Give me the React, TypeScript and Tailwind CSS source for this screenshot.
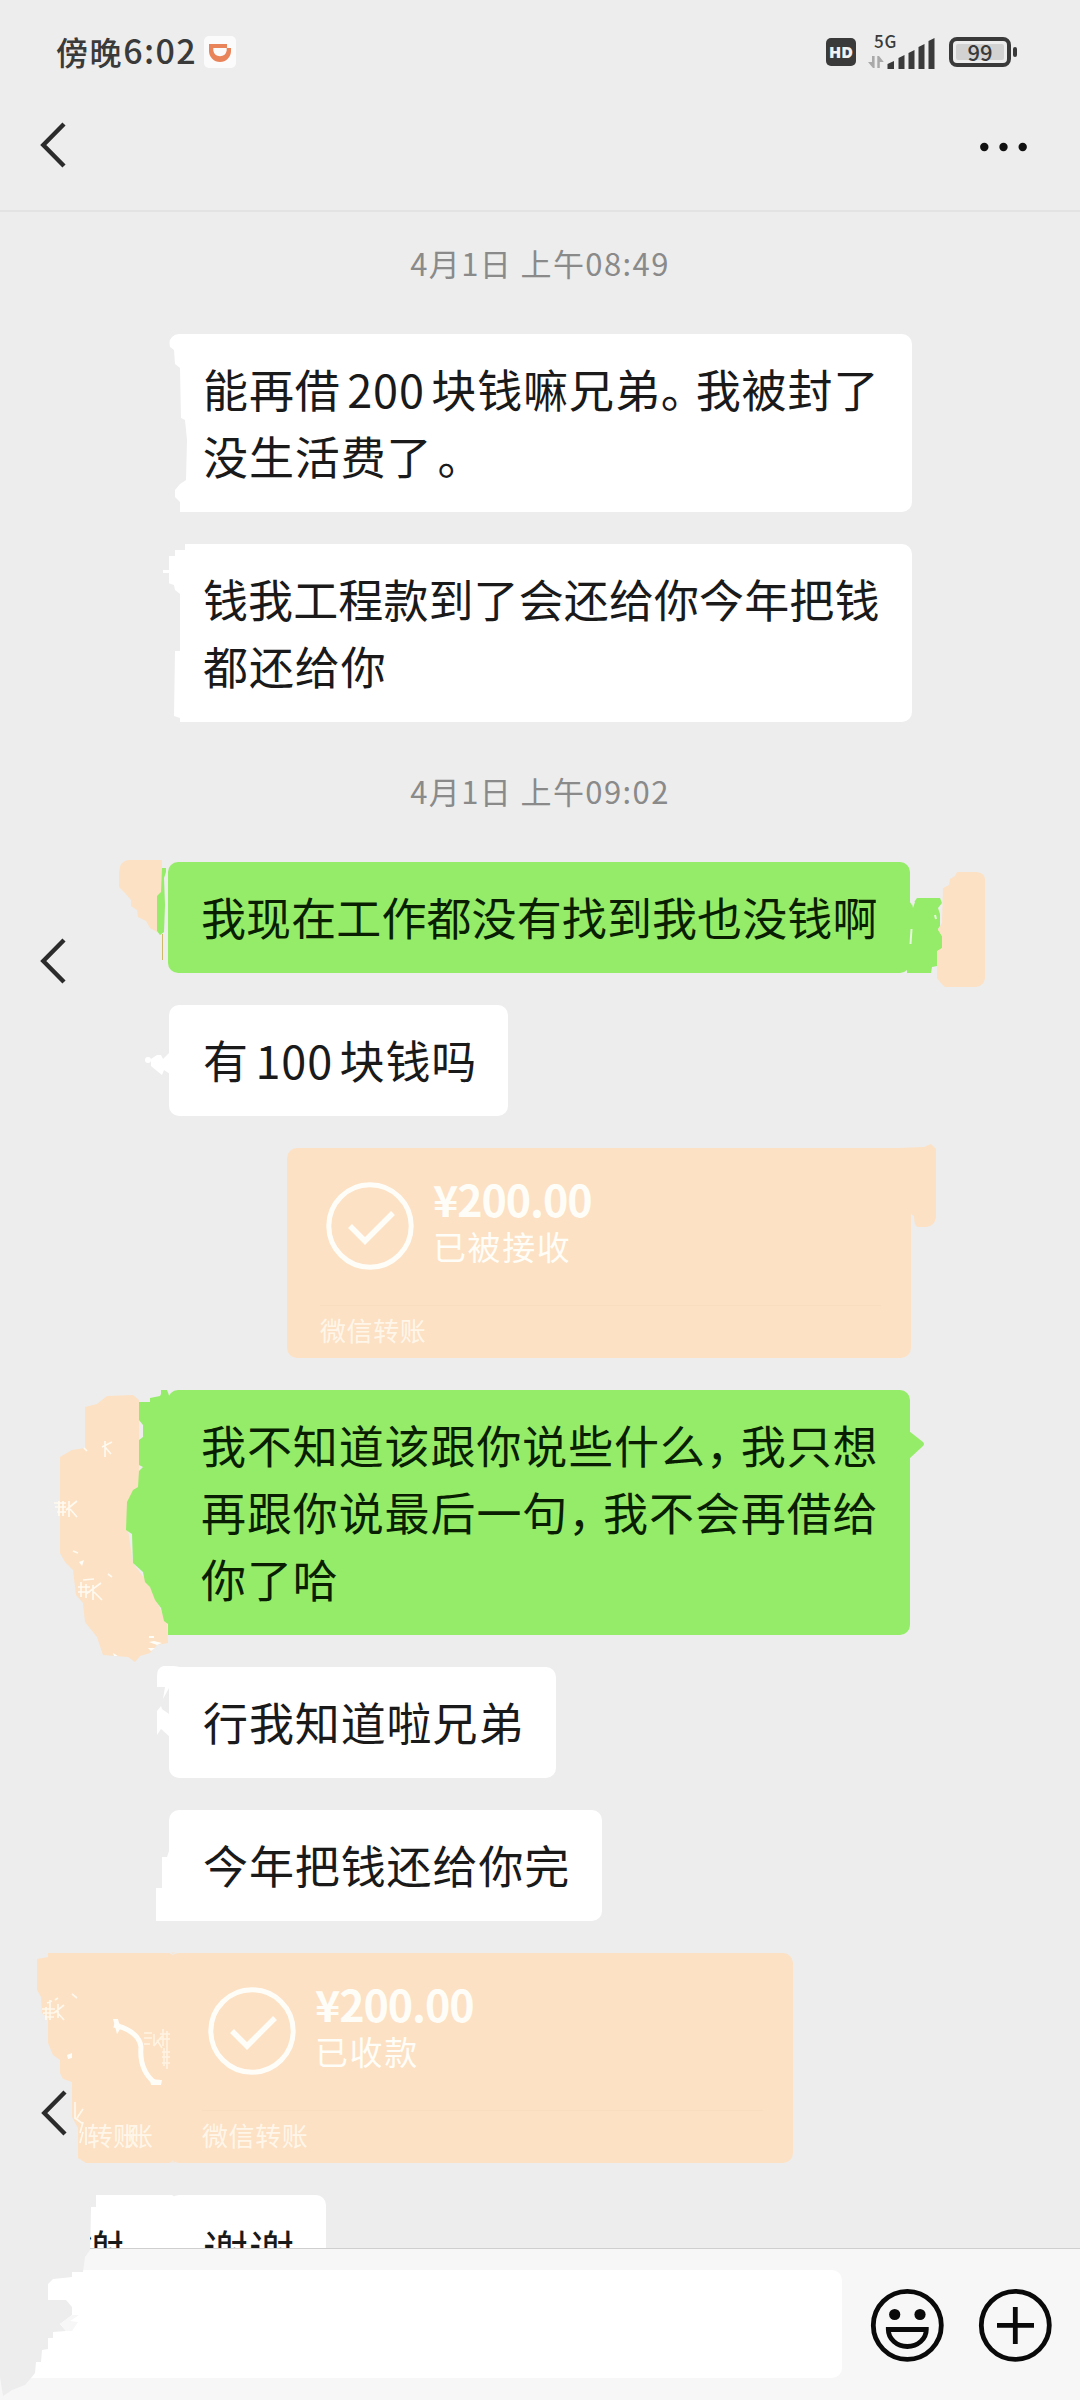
import type { ReactNode } from "react";

type BrushProps = { top: number; height: number; children: ReactNode };

// Brush strokes over a row; coordinates inside are page coordinates.
function Brush({ top, height, children }: BrushProps) {
    return (
        <svg
            className="absolute left-0 top-0 overflow-visible pointer-events-none"
            width="1080"
            height={height}
            viewBox={`0 ${top} 1080 ${height}`}
            fill="none"
        >
            {children}
        </svg>
    );
}

function BackIcon() {
    return (
        <svg width="28" height="48" viewBox="0 0 28 48" fill="none">
            <path d="M25 3L4.3 24L25 45" stroke="#2b2b2b" strokeWidth="4.4" />
        </svg>
    );
}

function StatusBar() {
    return (
        <div className="flex h-[104px] items-center justify-between pl-[56px] pr-[63px] text-[#3a3a3a]">
            <div className="flex items-center">
                <span className="-mt-[3px] text-[32px] leading-[40px] font-medium tracking-[1.6px]">
                    傍晚
                </span>
                <span className="-mt-[4px] text-[34px] leading-[40px] font-medium tracking-[1.4px]">
                    6:02
                </span>
                <svg className="ml-[7px]" width="32" height="32" viewBox="0 0 32 32">
                    <rect width="32" height="32" rx="5" fill="#fbfbfb" />
                    <path
                        d="M5 8H23V12H27V15A11 11 0 0 1 5 15ZM9.3 12V14.5A6.8 6.8 0 0 0 22.7 14.5V12Z"
                        fill="#e9835a"
                        fillRule="evenodd"
                    />
                </svg>
            </div>
            <div className="flex items-center">
                <div className="flex h-[28px] w-[30px] items-center justify-center rounded-[5px] bg-[#3a3a3a] font-['Open_Sans','Noto_Sans',sans-serif] text-[16px] leading-none font-extrabold text-[#f2f2f2]">
                    HD
                </div>
                <div className="relative ml-[12px] h-[34px] w-[67px]">
                    <span className="absolute left-[6px] -top-[2px] text-[17px] leading-[16px] font-medium tracking-[0.8px]">
                        5G
                    </span>
                    <svg className="absolute inset-0" width="67" height="34" viewBox="0 0 67 34">
                        <path
                            d="M4 21H6.6V33H5L0 27H4ZM9.3 33V21H11L15.8 27H11.8V33Z"
                            fill="#a9a9a9"
                        />
                        <g fill="#3a3a3a">
                            <path d="M19.5 29L26 26V34H19.5Z" />
                            <path d="M30.5 23L36.5 20V34H30.5Z" />
                            <path d="M40.5 18L46.5 15V34H40.5Z" />
                            <path d="M50.5 12L56.5 9V34H50.5Z" />
                            <path d="M60.5 6L66.5 3V34H60.5Z" />
                        </g>
                    </svg>
                </div>
                <div className="ml-[14px] flex h-[30px] w-[62px] items-center justify-center rounded-[8px] border-[4px] border-[#3a3a3a] p-[3px]">
                    <span className="flex h-full w-full items-center justify-center rounded-[2px] bg-[#d2d2d2] pb-[2px] text-[22px] leading-none font-medium">
                        99
                    </span>
                </div>
                <div className="ml-[2px] h-[10px] w-[4px] rounded-[2px] bg-[#3a3a3a]" />
            </div>
        </div>
    );
}

function NavBar() {
    return (
        <div className="flex h-[108px] justify-between border-b-2 border-[#e3e3e3] pl-[39px] pr-[53px] pt-[17px]">
            <BackIcon />
            <svg className="mt-[21px]" width="47" height="10" viewBox="0 0 47 10" fill="#111">
                <circle cx="4.3" cy="5" r="4.2" />
                <circle cx="23.5" cy="5" r="4.2" />
                <circle cx="42.7" cy="5" r="4.2" />
            </svg>
        </div>
    );
}

function TimeLabel({ children }: { children: ReactNode }) {
    return (
        <div className="flex h-[76px] items-center justify-center pb-[3px] text-[31px] leading-none tracking-[1.4px] text-[#8a8a8a]">
            {children}
        </div>
    );
}

function Received({ width, children, brush }: { width: string; children: ReactNode; brush?: ReactNode }) {
    return (
        <div className="relative flex pl-[169px]">
            <div className={`${width} rounded-[10px] bg-white pt-[21px] pb-[23px] pl-[34px] text-[#1a1a1a]`}>
                {children}
            </div>
            {brush}
        </div>
    );
}

function Sent({ children, brush }: { children: ReactNode; brush?: ReactNode }) {
    return (
        <div className="relative flex pl-[168px]">
            <div className="w-[742px] rounded-[10px] bg-[#95ec69] pt-[21px] pb-[23px] pl-[33px] text-[#0a1f02]">
                {children}
            </div>
            {brush}
        </div>
    );
}

// A line of 15 glyphs is squeezed a little so that it fits the bubble.
function Line({ tight, children }: { tight?: boolean; children: ReactNode }) {
    return (
        <p
            className={`h-[67px] text-[45px] leading-[67px] whitespace-nowrap [word-spacing:-4.5px] ${
                tight ? "tracking-[0.1px]" : "tracking-[0.9px]"
            }`}
        >
            {children}
        </p>
    );
}

// Punctuation in the middle of a line takes less than a full glyph.
function Mark({ children }: { children: ReactNode }) {
    return <span className="mr-[11.5px] [font-feature-settings:'halt']">{children}</span>;
}

function TransferCard({ width, status }: { width: string; status: string }) {
    return (
        <div className={`${width} h-[210px] rounded-[10px] bg-[#fce1c4] pl-[33px] pr-[30px] text-[#fffdf8]`}>
            <div className="flex h-[157px] pt-[34px] pl-[6px]">
                <svg width="88" height="88" viewBox="0 0 88 88" fill="none" stroke="currentColor">
                    <circle cx="44" cy="44" r="41.2" strokeWidth="5" />
                    <path d="M24 44L39 59L67 31" strokeWidth="5.5" />
                </svg>
                <div className="-mt-[3px] ml-[19px]">
                    <p className="h-[45px] text-[43px] leading-[38px] font-bold tracking-[-1.1px]">
                        ¥200.00
                    </p>
                    <p className="text-[33px] leading-[44px] tracking-[1.6px]">{status}</p>
                </div>
            </div>
            <div className="border-t border-[#f8debf] pt-[5px] text-[26px] leading-[38px] tracking-[0.6px] text-[#fff6ea]">
                微信转账
            </div>
        </div>
    );
}

function InputBar() {
    return (
        <div className="relative flex h-[152px] border-t border-[#cfcfcf] bg-[#f7f7f7] pt-[21px]">
            <div className="ml-[30px] h-[108px] w-[812px] rounded-r-[10px] bg-white" />
            <svg
                className="ml-[28px] mt-[18px]"
                width="74"
                height="74"
                viewBox="0 0 74 74"
                fill="none"
                stroke="#0a0a0a"
                strokeWidth="4.8"
            >
                <circle cx="37.3" cy="37.3" r="34" />
                <circle cx="24.7" cy="26.5" r="5.6" fill="#0a0a0a" stroke="none" />
                <circle cx="50" cy="26.5" r="5.6" fill="#0a0a0a" stroke="none" />
                <path d="M18.3 41.5H56.3A19 17 0 0 1 18.3 41.5Z" />
            </svg>
            <svg
                className="ml-[34px] mt-[18px]"
                width="74"
                height="74"
                viewBox="0 0 74 74"
                fill="none"
                stroke="#0a0a0a"
                strokeWidth="4.8"
            >
                <circle cx="37.3" cy="37.3" r="34" />
                <path d="M37.3 19V56M19 37.3H56" />
            </svg>
            <Brush top={2249} height={152}>
                <path
                    d="M0 2247H90V2250L85 2257L83 2272H72V2277L53 2279L48 2284V2300H66L72 2307V2315L60 2324L66 2331L53 2332V2338H48V2349L42 2350L41 2362H36L35 2373L31 2378L25 2385L12 2390L3 2396L0 2377Z"
                    fill="#ededed"
                />
                <path d="M72 2315L60 2324L66 2331H72L78 2322L70 2321L79 2315Z" fill="#f7f7f7" />
            </Brush>
        </div>
    );
}

export default function App() {
    return (
        <div
            lang="zh-CN"
            className="flex h-[2400px] w-[1080px] flex-col overflow-hidden bg-[#ededed] font-['Noto_Sans_CJK_SC',sans-serif]"
        >
            <StatusBar />
            <NavBar />

            <div className="relative flex h-[2036px] flex-col gap-8 overflow-hidden pt-[14px] *:shrink-0">
                <TimeLabel>4月1日 上午08:49</TimeLabel>

                <Received
                    width="w-[743px]"
                    brush={
                        <Brush top={334} height={178}>
                            <path
                                d="M166 333H175L169 340L170 347L174 350L175 364L180 368L181 418L185 420L187 440L186 480L180 484L175 490V497L180 502V513H166Z"
                                fill="#ededed"
                            />
                        </Brush>
                    }
                >
                    <Line>
                        能再借 200 块钱嘛兄弟<Mark>。</Mark>我被封了
                    </Line>
                    <Line>
                        没生活费了<span className="ml-[5px]">。</span>
                    </Line>
                </Received>

                <Received
                    width="w-[743px]"
                    brush={
                        <Brush top={544} height={178}>
                            <path
                                d="M166 543H185V550H175V556H168V583L174 585L175 590L180 594L180 651H175L174 716L180 718V723H166Z"
                                fill="#ededed"
                            />
                            <path d="M163 570H170V573H163Z" fill="#fff" />
                        </Brush>
                    }
                >
                    <Line tight>钱我工程款到了会还给你今年把钱</Line>
                    <Line>都还给你</Line>
                </Received>

                <TimeLabel>4月1日 上午09:02</TimeLabel>

                <Sent
                    brush={
                        <Brush top={862} height={111}>
                            <path
                                d="M119 872Q120 861 128 860H162V893L157 897V932L150 928L146 921L138 917L137 910L131 906V900L125 893L119 887Z"
                                fill="#fce1c4"
                            />
                            <path
                                d="M162 868H166V872L164 878L165 905L164 932L160 935L157 931V896L161 892Z"
                                fill="#95ec69"
                            />
                            <path d="M162.500 934V960" stroke="#cdb96a" />
                            <path
                                d="M907 898L912 905L917 898H940L942 903L938 908L940 914V926L938 929L942 936V948L937 952V966L932 967L931 973H907Z"
                                fill="#95ec69"
                            />
                            <path d="M911.500 929L910.500 944M935 915L936 919" stroke="#e5f7dc" strokeWidth="2" />
                            <path d="M911 899L915 902L913 908Z" fill="#ededed" />
                            <path
                                d="M943 888L949 885L950 879L955 876L957 872H977Q985 873 985 880V978Q984 986 976 987H945L940 982L937 978V951L942 948V936L938 930L942 923Z"
                                fill="#fce1c4"
                            />
                        </Brush>
                    }
                >
                    <Line tight>我现在工作都没有找到我也没钱啊</Line>
                </Sent>

                <Received
                    width="w-[339px]"
                    brush={
                        <Brush top={1005} height={111}>
                            <path
                                d="M170 1052L163 1059L161 1055L157 1055L151 1059L151 1066L157 1071L162 1075L164 1070L170 1074Z"
                                fill="#fff"
                            />
                            <circle cx="148" cy="1060" r="3" fill="#fff" />
                        </Brush>
                    }
                >
                    <Line>有 100 块钱吗</Line>
                </Received>

                <div className="relative flex pl-[287px]">
                    <TransferCard width="w-[624px]" status="已被接收" />
                    <Brush top={1148} height={210}>
                        <path
                            d="M898 1148L924 1147L931 1144L936 1149V1217Q935 1226 926 1227H918Q914 1226 914 1216L911 1214V1168Z"
                            fill="#fce1c4"
                        />
                    </Brush>
                </div>

                <Sent
                    brush={
                        <Brush top={1390} height={245}>
                            <path
                                d="M85 1407L97 1404L107 1396L133 1395L139 1400V1487L128 1502V1530L133 1563L148 1583L167 1623L168 1643L157 1645L150 1653L140 1656L135 1662L128 1657L103 1655L97 1637L85 1622L83 1603L76 1595L73 1570L65 1562L60 1553V1457L72 1450L85 1448Z"
                                fill="#fce1c4"
                            />
                            <path
                                d="M180 1390L170 1398L167 1390H161V1394L160 1396L150 1398V1402H139V1420L143 1425V1437L139 1440V1465L143 1467L139 1471L138 1487L133 1490L127 1502L126 1530L132 1534L133 1563L143 1572L145 1582L150 1587L155 1600L161 1608L164 1621L168 1624V1635H180Z"
                                fill="#95ec69"
                            />
                            <path
                                d="M105 1441V1457M102 1447L112 1442M105 1447L111 1454M54 1503H66M55 1507H66M57 1512H66M69 1501V1517M66 1510L77 1501M70 1509L77 1517M59 1501V1516M63 1501V1516M78 1587H90M78 1592H90M81 1582V1597M86 1584V1598M93 1585V1600M86 1594L101 1583M94 1592L102 1600M83 1580L94 1579M84 1448L87 1451M108 1574L112 1577M73 1551L78 1553"
                                stroke="#fffaf0"
                                strokeWidth="1.7"
                            />
                            <path
                                d="M79 1562L84 1560L82 1566ZM149 1636H154V1638H149ZM149 1642L154 1641L162 1643L157 1645ZM148 1648H155L151 1651ZM113 1653L118 1656H114Z"
                                fill="#fffdf8"
                            />
                            <path d="M909 1431L923 1442Q925 1444 923 1446L909 1459Z" fill="#95ec69" />
                        </Brush>
                    }
                >
                    <Line>
                        我不知道该跟你说些什么<Mark>，</Mark>我只想
                    </Line>
                    <Line>
                        再跟你说最后一句<Mark>，</Mark>我不会再借给
                    </Line>
                    <Line>你了哈</Line>
                </Sent>

                <Received
                    width="w-[387px]"
                    brush={
                        <Brush top={1667} height={111}>
                            <path
                                d="M180 1667L174 1666H163Q157 1668 157 1676V1687H165L163 1699L169 1688V1714L162 1709L161 1706L157 1711V1735L161 1729L170 1737L175 1700Z"
                                fill="#fff"
                            />
                        </Brush>
                    }
                >
                    <Line>行我知道啦兄弟</Line>
                </Received>

                <Received
                    width="w-[433px]"
                    brush={
                        <Brush top={1810} height={111}>
                            <path
                                d="M170 1848L167 1857H162V1888H156V1921H171L180 1921V1900L170 1880Z"
                                fill="#fff"
                            />
                        </Brush>
                    }
                >
                    <Line>今年把钱还给你完</Line>
                </Received>

                <div className="relative flex pl-[169px]">
                    <TransferCard width="w-[624px]" status="已收款" />
                    <Brush top={1953} height={210}>
                        <path
                            d="M48 1953H169L173 1955L180 1953V2163L173 2161L169 2163H86L78 2158V2128L72 2117V2082L63 2079L60 2073V2060L53 2055L48 2043V2018L42 2013L41 1997L37 1990V1959L48 1957Z"
                            fill="#fce1c4"
                        />
                        <path d="M171 1952L175 1952L173 1956ZM170 2163L175 2163L173 2160Z" fill="#f3e8da" />
                        <path
                            d="M114 2025Q139 2031 141 2047Q139 2070 155 2083"
                            stroke="#fffdf8"
                            strokeWidth="5"
                        />
                        <path
                            d="M113 2019H118L119 2023L122 2026L117 2034ZM150 2079L162 2080L161 2085L151 2085Z"
                            fill="#fffdf8"
                        />
                        <path
                            d="M42 2009H55M43 2013H54M45 2017H54M50 2000V2020M46 2007V2020M54 2013L64 2005M57 2012L64 2020M58 2004V2018M47 2003L52 2001M55 2000L58 1998M72 1994L77 1998M75 2102V2118L83 2124M77 2118L83 2109M83 2122L80 2133M83 2132L80 2143M86 2127V2145"
                            stroke="#fff8ec"
                            strokeWidth="1.7"
                        />
                        <path
                            d="M144 2033H152M144 2038H152M144 2044H150M154 2034V2046M154 2046L162 2036M157 2040L162 2048M160 2034H170M160 2039H170M163 2029V2046M167 2031V2069M162 2052H170M162 2057H170M162 2063H170M164 2048V2066"
                            stroke="#fff3e2"
                            strokeWidth="1.6"
                        />
                        <path d="M67 2055L72 2053V2058L68 2059ZM61 2043L64 2045Z" fill="#fffdf8" />
                    </Brush>
                    <span className="absolute left-[87px] top-[163px] text-[26px] leading-[38px] whitespace-nowrap text-[#fff6ea]">
                        转<span className="-mr-[12px]">账</span>账
                    </span>
                </div>

                <Received
                    width="w-[157px]"
                    brush={
                        <>
                            <Brush top={2195} height={111}>
                                <path d="M96 2195H172L175 2197L180 2195V2260H90L91 2207H96Z" fill="#fff" />
                            </Brush>
                            <div className="absolute left-[90px] top-[21px] w-[60px] overflow-hidden text-[#1a1a1a]">
                                <div className="-ml-[11px]">
                                    <Line>谢</Line>
                                </div>
                            </div>
                        </>
                    }
                >
                    <Line>谢谢</Line>
                </Received>

                {/* back arrows lying over the list */}
                <div className="absolute left-[39px] top-[725px]">
                    <BackIcon />
                </div>
                <div className="absolute left-[40px] top-[1877px]">
                    <BackIcon />
                </div>
            </div>

            <InputBar />
        </div>
    );
}
